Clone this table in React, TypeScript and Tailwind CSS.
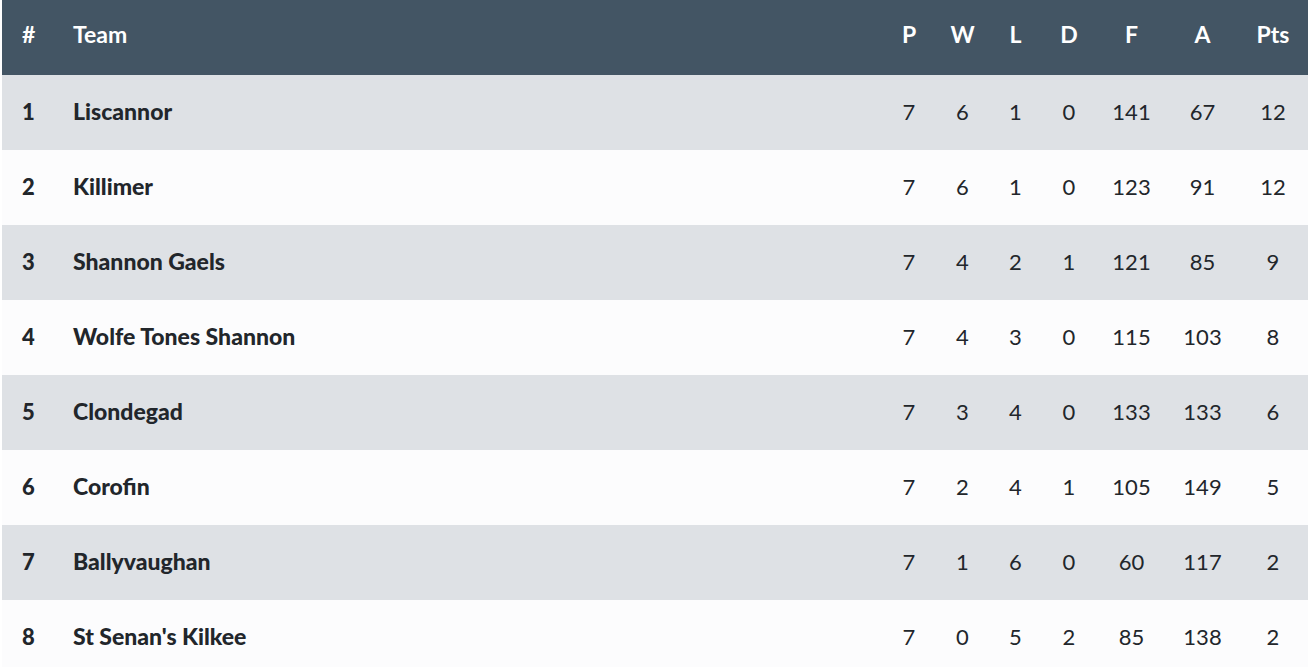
import React from "react";

const rows: [number, string, number, number, number, number, number, number, number][] = [
  [1, "Liscannor", 7, 6, 1, 0, 141, 67, 12],
  [2, "Killimer", 7, 6, 1, 0, 123, 91, 12],
  [3, "Shannon Gaels", 7, 4, 2, 1, 121, 85, 9],
  [4, "Wolfe Tones Shannon", 7, 4, 3, 0, 115, 103, 8],
  [5, "Clondegad", 7, 3, 4, 0, 133, 133, 6],
  [6, "Corofin", 7, 2, 4, 1, 105, 149, 5],
  [7, "Ballyvaughan", 7, 1, 6, 0, 60, 117, 2],
  [8, "St Senan's Kilkee", 7, 0, 5, 2, 85, 138, 2],
];

export default function App() {
  return (
    <div className="min-h-screen bg-white px-[2px] font-['Lato',sans-serif] text-[#22262b]">
      <table className="w-full table-fixed border-collapse">
        <colgroup>
          <col className="w-[50px]" />
          <col />
          <col className="w-[54px]" />
          <col className="w-[53px]" />
          <col className="w-[53px]" />
          <col className="w-[54px]" />
          <col className="w-[71px]" />
          <col className="w-[71px]" />
          <col className="w-[70px]" />
        </colgroup>
        <thead>
          <tr className="h-[75px] bg-[#435564] text-[23px] font-black text-white">
            <th className="pb-[6px] pl-5 text-left">#</th>
            <th className="pb-[6px] pl-[21px] text-left">Team</th>
            <th className="pb-[6px] text-center">P</th>
            <th className="pb-[6px] text-center">W</th>
            <th className="pb-[6px] text-center">L</th>
            <th className="pb-[6px] text-center">D</th>
            <th className="pb-[6px] text-center">F</th>
            <th className="pb-[6px] text-center">A</th>
            <th className="pb-[6px] text-center">Pts</th>
          </tr>
        </thead>
        <tbody>
          {rows.map((r, i) => (
            <tr
              key={r[0]}
              className={`h-[75px] text-[22px] ${i % 2 === 0 ? "bg-[#dee1e5]" : "bg-[#fcfcfd]"}`}
            >
              <td className="pb-[3px] pl-5 text-left font-black">{r[0]}</td>
              <td className="pb-[3px] pl-[21px] text-left text-[23px] font-black">{r[1]}</td>
              {r.slice(2).map((v, j) => (
                <td key={j} className="pb-[3px] text-center">
                  {v}
                </td>
              ))}
            </tr>
          ))}
        </tbody>
      </table>
    </div>
  );
}
